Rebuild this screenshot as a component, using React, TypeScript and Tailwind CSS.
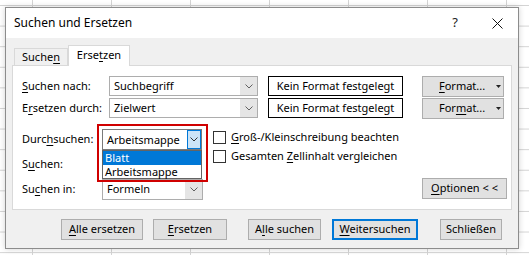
import React from "react";
import clsx from "clsx";

const Key = ({ children }: { children: React.ReactNode }) => (
  <span className="underline decoration-1 underline-offset-[2px]">{children}</span>
);

const Chevron = ({ color = "#606060" }: { color?: string }) => (
  <svg width="8" height="5" viewBox="0 0 8 5">
    <path d="M0.5 0.5L4 4L7.5 0.5" fill="none" stroke={color} strokeWidth="1" />
  </svg>
);

const Combo = ({ value, className }: { value: string; className?: string }) => (
  <div className={clsx("flex h-[20px] border border-[#adadad] bg-white", className)}>
    <div className="flex-1 pl-[4px] leading-[18px]">{value}</div>
    <div className="flex w-[17px] items-center justify-center bg-[#e5e5e5]">
      <Chevron />
    </div>
  </div>
);

const Button = ({
  children,
  className,
}: {
  children: React.ReactNode;
  className?: string;
}) => (
  <div
    className={clsx(
      "flex h-[21px] items-center justify-center border border-[#adadad] bg-[#e1e1e1]",
      className
    )}
  >
    {children}
  </div>
);

const Checkbox = ({ children }: { children: React.ReactNode }) => (
  <div className="flex h-[19px] items-center">
    <div className="h-[13px] w-[13px] border border-[#333] bg-white" />
    <div className="ml-[5px]">{children}</div>
  </div>
);

export default function App() {
  return (
    <div className="h-[255px] w-[529px] overflow-hidden bg-white bg-[linear-gradient(to_right,#d4d4d4_1px,transparent_1px),linear-gradient(to_bottom,#d4d4d4_1px,transparent_1px)] bg-[size:79px_20.6px] bg-[position:32px_5px] pl-[5px] pt-[7px] font-['Noto_Sans',sans-serif] text-[11px] text-black">
      <div className="flex h-[242px] w-[514px] flex-col border border-[#8c8c8c] bg-[#f0f0f0] shadow-[0_0_6px_rgba(0,0,0,0.18)]">
        {/* title bar */}
        <div className="flex h-[30px] items-center bg-white pl-[8px] pr-[15px]">
          <span className="text-[12px]">Suchen und Ersetzen</span>
          <span className="ml-auto text-[13px] text-[#222]">?</span>
          <svg className="ml-[34px]" width="11" height="11" viewBox="0 0 11 11">
            <path d="M0.5 0.5L10.5 10.5M10.5 0.5L0.5 10.5" stroke="#111" strokeWidth="1" />
          </svg>
        </div>

        {/* tabs */}
        <div className="flex items-end pl-[8px] pt-[7px]">
          <div className="flex h-[17px] w-[54px] items-center justify-center border border-b-0 border-[#d9d9d9] pt-[1px]">
            Suche<Key>n</Key>
          </div>
          <div className="relative z-10 -mb-px flex h-[21px] w-[62px] items-center justify-center border border-b-0 border-[#d9d9d9] bg-white pb-[2px]">
            Erse<Key>t</Key>zen
          </div>
        </div>

        {/* panel */}
        <div className="mx-[6px] h-[145px] border border-[#d9d9d9] bg-white pl-[9px] pt-[10px]">
          <div className="flex h-[20px] items-center">
            <div className="w-[87px]">
              <Key>S</Key>uchen nach:
            </div>
            <Combo value="Suchbegriff" className="w-[149px]" />
            <div className="ml-[10px] flex h-[20px] w-[135px] items-center justify-center border border-black bg-white">
              Kein Format festgelegt
            </div>
            <Button className="ml-[19px] w-[82px] !justify-start pl-[16px]">
              <span>
                <Key>F</Key>ormat...
              </span>
              <svg className="ml-[11px]" width="5" height="3" viewBox="0 0 5 3">
                <path d="M0 0H5L2.5 3Z" fill="#222" />
              </svg>
            </Button>
          </div>
          <div className="mt-[2px] flex h-[20px] items-center">
            <div className="w-[87px]">
              E<Key>r</Key>setzen durch:
            </div>
            <Combo value="Zielwert" className="w-[149px]" />
            <div className="ml-[10px] flex h-[20px] w-[135px] items-center justify-center border border-black bg-white">
              Kein Format festgelegt
            </div>
            <Button className="ml-[19px] w-[82px] !justify-start pl-[16px]">
              <span>
                For<Key>m</Key>at...
              </span>
              <svg className="ml-[11px]" width="5" height="3" viewBox="0 0 5 3">
                <path d="M0 0H5L2.5 3Z" fill="#222" />
              </svg>
            </Button>
          </div>

          <div className="mt-[11px] flex pr-[4px]">
            <div className="flex flex-col gap-[4px]">
              <div className="flex h-[21px] items-center">
                <div className="w-[80px]">
                  Durc<Key>h</Key>suchen:
                </div>
                <div className="relative">
                  <div className="flex h-[21px] w-[100px] border border-[#7a7a7a] bg-white">
                    <div className="flex-1 pl-[4px] leading-[19px]">Arbeitsmappe</div>
                    <div className="flex w-[14px] items-center justify-center border border-[#0078d7] bg-[#cce4f7]">
                      <Chevron color="#333" />
                    </div>
                  </div>
                  <div className="absolute left-0 top-[21px] z-10 w-[100px] border border-[#646464] bg-white leading-[13.5px]">
                    <div className="bg-[#0078d7] pl-[2px] text-white">Blatt</div>
                    <div className="pl-[2px]">Arbeitsmappe</div>
                  </div>
                  <div className="absolute left-[-5px] top-[-5px] z-20 h-[58px] w-[111px] border-2 border-[#d00000]" />
                </div>
              </div>
              <div className="flex h-[21px] items-center">
                <div className="w-[80px]">
                  S<Key>u</Key>chen:
                </div>
              </div>
              <div className="flex h-[21px] items-center">
                <div className="w-[80px]">
                  Su<Key>c</Key>hen in:
                </div>
                <Combo value="Formeln" className="h-[21px] w-[101px]" />
              </div>
            </div>

            <div className="-mt-[1px] ml-[10px] flex flex-col">
              <Checkbox>
                <Key>G</Key>roß-/Kleinschreibung beachten
              </Checkbox>
              <Checkbox>
                Gesamten <Key>Z</Key>ellinhalt vergleichen
              </Checkbox>
            </div>

            <Button className="mb-[1px] ml-auto w-[85px] self-end">
              <span>
                <Key>O</Key>ptionen &lt; &lt;
              </span>
            </Button>
          </div>
        </div>

        {/* bottom buttons */}
        <div className="mt-[9px] flex pl-[55px]">
          <Button className="w-[82px]">
            <span>
              <Key>A</Key>lle ersetzen
            </span>
          </Button>
          <Button className="ml-[10px] w-[74px]">
            <span>
              <Key>E</Key>rsetzen
            </span>
          </Button>
          <Button className="ml-[21px] w-[73px]">
            <span>
              A<Key>l</Key>le suchen
            </span>
          </Button>
          <Button className="ml-[11px] w-[86px] border-2 !border-[#0078d7]">
            <span>
              <Key>W</Key>eitersuchen
            </span>
          </Button>
          <Button className="ml-[22px] w-[62px]">
            <span>Schließen</span>
          </Button>
        </div>
      </div>
    </div>
  );
}
